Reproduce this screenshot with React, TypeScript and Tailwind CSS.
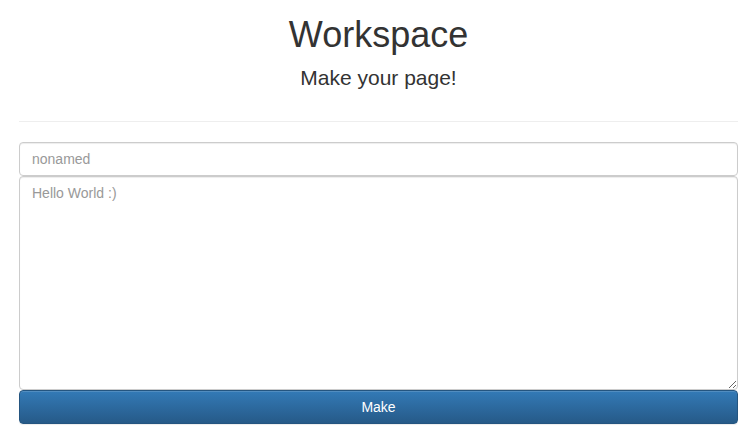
import React from "react";

export default function App() {
  return (
    <div
      className="min-h-screen bg-white pl-[19px] pr-[15px] text-[#333]"
      style={{ fontFamily: '"Liberation Sans", Arial, sans-serif' }}
    >
      <div className="pt-[15px] text-center">
        <h1 className="text-[36px] leading-[39.6px] font-normal">Workspace</h1>
        <h3 className="mt-[12px] text-[21px] leading-[22px] font-normal">Make your page!</h3>
      </div>
      <hr className="mt-[32px] border-0 border-t border-[#eee]" />
      <div className="mt-[20px] flex flex-col">
        <input
          className="h-[34px] w-full rounded-[4px] border border-[#ccc] px-[12px] py-[6px] text-[14px] text-[#555] shadow-[inset_0_1px_1px_rgba(0,0,0,0.075)] outline-none placeholder:text-[#999]"
          placeholder="nonamed"
        />
        <textarea
          className="h-[214px] w-full rounded-[4px] border border-[#ccc] px-[12px] py-[6px] text-[14px] leading-[20px] text-[#555] shadow-[inset_0_1px_1px_rgba(0,0,0,0.075)] outline-none placeholder:text-[#999]"
          placeholder="Hello World :)"
        />
        <button className="h-[34px] w-full rounded-[4px] border border-[#245580] bg-gradient-to-b from-[#337ab7] to-[#265a88] pt-[2px] text-[14px] text-white shadow-[inset_0_1px_0_rgba(255,255,255,0.15),0_1px_1px_rgba(0,0,0,0.075)]">
          Make
        </button>
      </div>
    </div>
  );
}
